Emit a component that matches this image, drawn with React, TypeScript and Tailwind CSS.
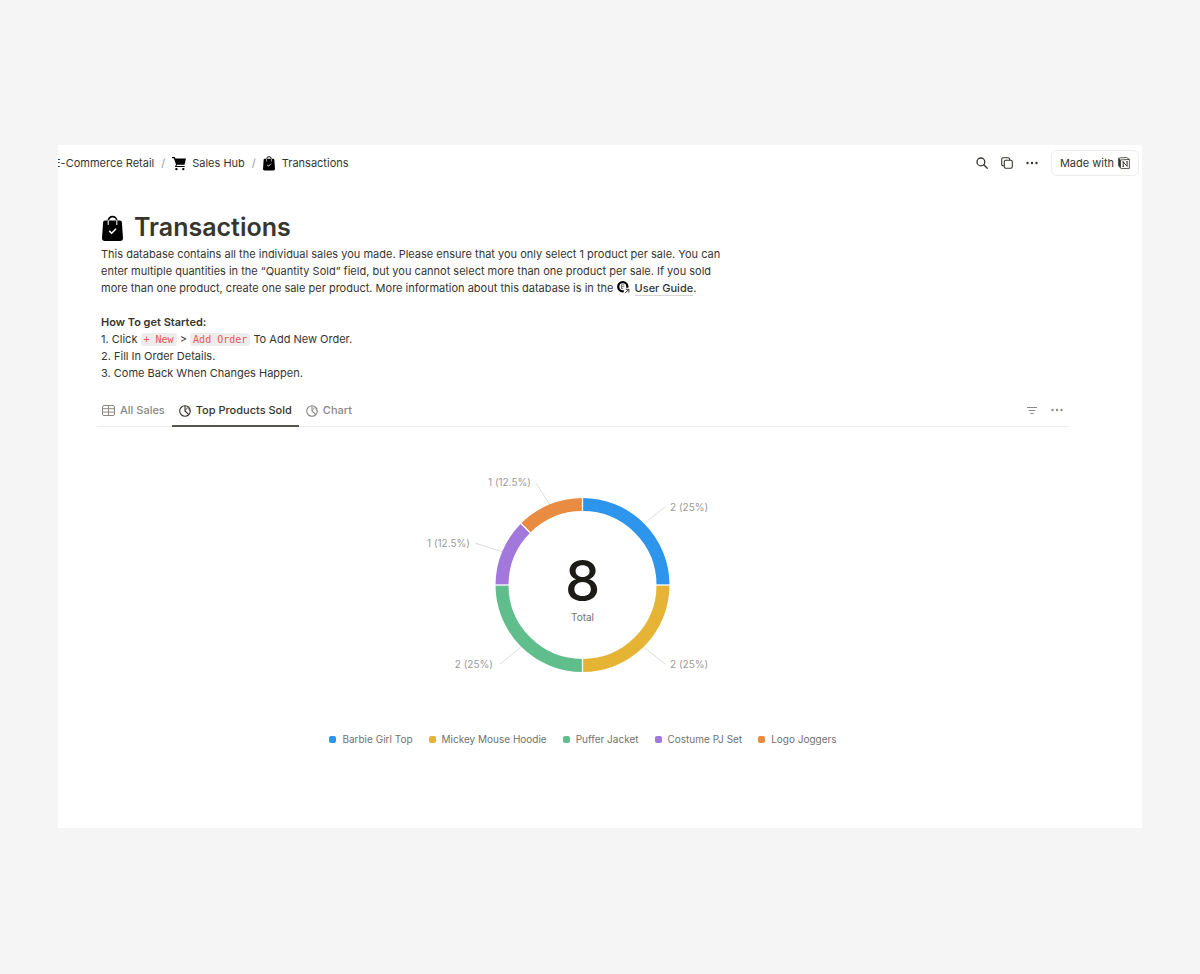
import type { ReactNode } from "react";

type Slice = { name: string; value: number; color: string };

const slices: Slice[] = [
  { name: "Barbie Girl Top", value: 2, color: "#2d96ec" },
  { name: "Mickey Mouse Hoodie", value: 2, color: "#e6b434" },
  { name: "Puffer Jacket", value: 2, color: "#60be8d" },
  { name: "Costume PJ Set", value: 1, color: "#a378dc" },
  { name: "Logo Joggers", value: 1, color: "#ea8b42" },
];

const total = slices.reduce((sum, s) => sum + s.value, 0);

function BagIcon({ className }: { className: string }) {
  return (
    <svg viewBox="0 0 22 27" className={className} aria-hidden="true">
      <path d="M6.5 9V5.500a4.500 4.500 0 0 1 9 0V9" fill="none" stroke="#000" strokeWidth="1.700" />
      <path d="M3.200 5h15.600a2 2 0 0 1 2 1.800L22 23.400A3 3 0 0 1 19 26.500H3a3 3 0 0 1-3-3.100L1.200 6.800a2 2 0 0 1 2-1.800Z" fill="#000" />
      <path d="M6.500 5v4.200M15.500 5v4.200" fill="none" stroke="#fff" strokeWidth="1.100" strokeLinecap="round" />
      <path d="m7.600 16 2.500 2.400 4.600-4.600" fill="none" stroke="#fff" strokeWidth="1.600" />
    </svg>
  );
}

function CartIcon() {
  return (
    <svg viewBox="0 0 14 15" className="h-[15px] w-[14px]" aria-hidden="true">
      <path d="M0 1h2.700l.7 1.500H14L12.500 8.800H4.900l-.4 1.100h8.200v1.200H2.900L4 8.400 1.900 2.200H0Z" fill="#000" />
      <circle cx="4.400" cy="13.100" r="1.200" fill="#000" />
      <circle cx="11.300" cy="13.100" r="1.200" fill="#000" />
    </svg>
  );
}

function SearchIcon() {
  return (
    <svg viewBox="0 0 12 12" className="size-3" fill="none" stroke="#37352f" strokeWidth="1.300" strokeLinecap="round" aria-hidden="true">
      <circle cx="4.900" cy="4.900" r="3.900" />
      <path d="m7.800 7.800 3.400 3.400" />
    </svg>
  );
}

function CopyIcon() {
  return (
    <svg viewBox="0 0 12 12" className="size-3" fill="none" stroke="#37352f" strokeWidth="1.100" aria-hidden="true">
      <rect x="3.300" y="3.300" width="8" height="8" rx="1.500" />
      <path d="M3.300 8.700H2.200A1.500 1.500 0 0 1 .7 7.200v-5A1.500 1.500 0 0 1 2.200.7h5a1.500 1.500 0 0 1 1.500 1.500v1.100" />
    </svg>
  );
}

function DotsIcon({ className }: { className: string }) {
  return (
    <svg viewBox="0 0 12 4" className={className} fill="currentColor" aria-hidden="true">
      <circle cx="1.500" cy="2" r="1.200" />
      <circle cx="6" cy="2" r="1.200" />
      <circle cx="10.500" cy="2" r="1.200" />
    </svg>
  );
}

function NotionIcon() {
  return (
    <svg viewBox="0 0 12 12" className="size-3" aria-hidden="true">
      <path d="M.6 1 8.600.5l2.800 1.900v9l-8.300.2L.6 8.800Z" fill="#fff" stroke="#37352f" strokeWidth=".8" strokeLinejoin="round" />
      <path d="M.6 1 2.900 2.900v8.700L.6 8.800Z" fill="#37352f" />
      <path d="M2.900 2.900 11.400 2.400" stroke="#37352f" strokeWidth=".8" />
      <path d="M5.200 9.400V4.900l3.900 4.500V4.700M4.400 4.900h1.300M4.500 9.400h1.400M8.400 4.700h1.400" fill="none" stroke="#37352f" strokeWidth="1" />
    </svg>
  );
}

function TableIcon() {
  return (
    <svg viewBox="0 0 13 11" className="h-[11px] w-[13px]" fill="none" stroke="currentColor" strokeWidth="1" aria-hidden="true">
      <rect x=".5" y=".5" width="12" height="10" rx="1.500" />
      <path d="M.5 3.700h12M.5 7.100h12M6.500.5v10" />
    </svg>
  );
}

function PieIcon() {
  return (
    <svg viewBox="0 0 12 12" className="size-3" fill="none" stroke="currentColor" strokeWidth="1.100" strokeLinejoin="round" aria-hidden="true">
      <circle cx="6" cy="6" r="5.300" />
      <path d="M6 .7V6l3.900 3.600" />
      <path d="M6 6 8.200 2.500 11.200 6" strokeWidth=".7" />
    </svg>
  );
}

function FilterIcon() {
  return (
    <svg viewBox="0 0 10 9" className="h-[9px] w-[10px]" fill="none" stroke="currentColor" strokeWidth="1.100" aria-hidden="true">
      <path d="M0 1.500h10M1.700 4.500h6.600M3.300 7.500h3.400" />
    </svg>
  );
}

function GuideIcon() {
  return (
    <svg viewBox="0 0 13 13" className="mr-[5px] inline-block size-[13px] align-[-2px]" aria-hidden="true">
      <circle cx="5.800" cy="5.800" r="4.600" fill="#fff" stroke="#000" strokeWidth="2.300" />
      <path d="M4.200 3.900h3.200M4.200 5.700h3.200M4.200 7.500h2M4.400 3.900v3.600" stroke="#555" strokeWidth=".8" />
      <path d="M6.800 13V9L9 6.800h4V13Z" fill="#fff" />
      <path d="M8 12.200 11.700 8.500M8.800 8.300h3.100v3.200" fill="none" stroke="#37352f" strokeWidth="1" />
    </svg>
  );
}

function Code({ children }: { children: ReactNode }) {
  return (
    <code className="rounded-[3px] bg-[#ededeb] px-[3px] py-px font-['DejaVu_Sans_Mono',monospace] text-[10px] leading-none text-[#eb5757]">
      {children}
    </code>
  );
}

function Tab({ icon, label, active }: { icon: ReactNode; label: string; active?: boolean }) {
  return (
    <button
      type="button"
      role="tab"
      aria-selected={!!active}
      className={
        active
          ? "-mb-px flex items-center gap-[5px] border-b-2 border-[#55534e] px-[7px] text-[#37352f]"
          : "-mb-px flex items-center gap-[5px] border-b-2 border-transparent px-[7px] text-[#8a8984]"
      }
    >
      {icon}
      {label}
    </button>
  );
}

// Donut geometry, clockwise from twelve o'clock
const CX = 159.5;
const CY = 115;
const R = 80.5;

function point(angle: number, r: number) {
  return [CX + r * Math.sin(angle), CY - r * Math.cos(angle)];
}

const labels = [
  { line: "M222 53 242 37", x: 247, y: 41, anchor: "start" as const },
  { line: "M222 178 242 194", x: 247, y: 198, anchor: "start" as const },
  { line: "M98 177 77 194", x: 70, y: 198, anchor: "end" as const },
  { line: "M80 82 52 73", x: 47, y: 77, anchor: "end" as const },
  { line: "M127 35 113 13", x: 108, y: 16, anchor: "end" as const },
];

function Donut() {
  let start = 0;
  const arcs = slices.map((s) => {
    const end = start + (s.value / total) * Math.PI * 2;
    const [x1, y1] = point(start, R);
    const [x2, y2] = point(end, R);
    const [ix, iy] = point(start, R - 8);
    const [ox, oy] = point(start, R + 8);
    start = end;
    return { ...s, d: `M${x1} ${y1}A${R} ${R} 0 0 1 ${x2} ${y2}`, gap: `M${ix} ${iy}L${ox} ${oy}` };
  });

  return (
    <svg viewBox="0 0 320 220" className="h-[220px] w-80" role="img" aria-label="Top Products Sold">
      {labels.map((l, i) => (
        <g key={slices[i].name}>
          <path d={l.line} stroke="#dededc" fill="none" />
          <text x={l.x} y={l.y} textAnchor={l.anchor} className="fill-[#9b9a97] text-[10px]">
            {`${slices[i].value} (${(slices[i].value / total) * 100}%)`}
          </text>
        </g>
      ))}
      {arcs.map((a) => (
        <path key={a.name} d={a.d} fill="none" stroke={a.color} strokeWidth="13" />
      ))}
      {arcs.map((a) => (
        <path key={a.name} d={a.gap} stroke="#fff" strokeWidth="1.300" />
      ))}
      <text x={CX} y="131" textAnchor="middle" className="fill-[#1d1b16] text-[56px] font-medium">
        {total}
      </text>
      <text x={CX} y="151" textAnchor="middle" className="fill-[#73726e] text-[10px]">
        Total
      </text>
    </svg>
  );
}

export default function App() {
  return (
    <div className="flex min-h-screen flex-col bg-[#f5f5f5] px-[58px] pt-[145px] pb-[146px] font-[Inter,sans-serif] text-[11px] text-[#37352f]">
      <div className="flex flex-1 flex-col overflow-hidden bg-white">
        <header className="flex h-9 items-center justify-between pr-[3px]">
          <nav aria-label="Breadcrumb" className="-ml-1 flex items-center gap-[7px] whitespace-nowrap">
            <a href="#retail">E-Commerce Retail</a>
            <span className="text-[#9b9a97]">/</span>
            <a href="#sales-hub" className="flex items-center gap-1.5">
              <CartIcon />
              Sales Hub
            </a>
            <span className="text-[#9b9a97]">/</span>
            <a href="#transactions" className="flex items-center gap-[7px]">
              <BagIcon className="h-[15px] w-3" />
              Transactions
            </a>
          </nav>
          <div className="flex items-center gap-[13px]">
            <button type="button" aria-label="Search">
              <SearchIcon />
            </button>
            <button type="button" aria-label="Duplicate">
              <CopyIcon />
            </button>
            <button type="button" aria-label="More">
              <DotsIcon className="h-1 w-3" />
            </button>
            <a href="#notion" className="flex h-[26px] items-center gap-1 rounded-md border border-[#ededec] px-2">
              Made with
              <NotionIcon />
            </a>
          </div>
        </header>

        <main className="flex flex-col pr-[73px] pl-[39px]">
          <h1 className="mt-[31px] flex h-8 items-center gap-[11px] pl-[5px] text-[25px] font-semibold">
            <BagIcon className="h-[27px] w-[21px]" />
            Transactions
          </h1>

          <div className="mt-0.5 max-w-[632px] pl-1 leading-[17px]">
            <p>
              This database contains all the individual sales you made. Please ensure that you only select 1 product per
              sale. You can enter multiple quantities in the “Quantity Sold” field, but you cannot select more than one
              product per sale. If you sold more than one product, create one sale per product. More information about
              this database is in the{" "}
              <a href="#user-guide" className="font-medium">
                <GuideIcon />
                <span className="border-b border-[#d6d5d2]">User Guide</span>
              </a>
              .
            </p>
            <h2 className="mt-[17px] font-semibold">How To get Started:</h2>
            <p>
              1. Click <Code>+ New</Code> &gt; <Code>Add Order</Code> To Add New Order.
            </p>
            <p>2. Fill In Order Details.</p>
            <p>3. Come Back When Changes Happen.</p>
          </div>

          <div className="mt-3.5 flex h-[31px] items-stretch justify-between border-b border-[#ececeb] pr-1.5">
            <div role="tablist" className="-ml-0.5 flex font-medium">
              <Tab icon={<TableIcon />} label="All Sales" />
              <Tab icon={<PieIcon />} label="Top Products Sold" active />
              <Tab icon={<PieIcon />} label="Chart" />
            </div>
            <div className="flex items-center gap-3.5 pb-0.5 text-[#8a8984]">
              <button type="button" aria-label="Filter">
                <FilterIcon />
              </button>
              <button type="button" aria-label="View options">
                <DotsIcon className="h-1 w-3" />
              </button>
            </div>
          </div>

          <section className="mt-[43px] flex flex-col items-center">
            <Donut />
            <ul className="mt-[42px] flex flex-wrap justify-center gap-x-4 text-[10px] text-[#73726e]">
              {slices.map((s) => (
                <li key={s.name} className="flex items-center gap-1.5">
                  <span className="size-[7px] rounded-[2px]" style={{ backgroundColor: s.color }} />
                  {s.name}
                </li>
              ))}
            </ul>
          </section>
        </main>
      </div>
    </div>
  );
}
